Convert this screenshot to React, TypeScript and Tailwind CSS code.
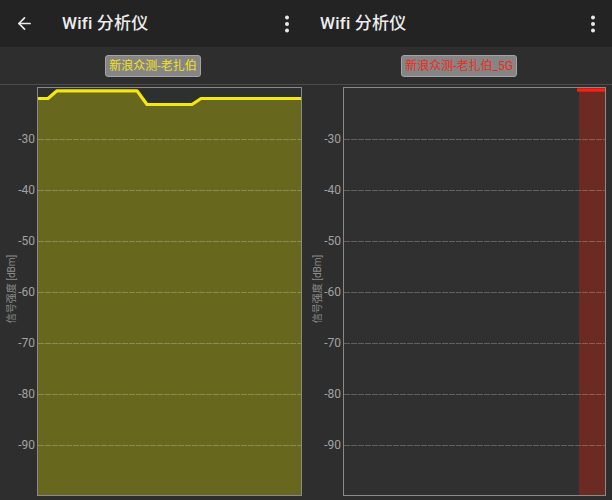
import { ArrowLeft } from "lucide-react";

const FONT = { fontFamily: 'Roboto, "Noto Sans CJK SC", sans-serif' };

// plot geometry (px): grid lines every 51px, top of plot is about -20 dBm
const PLOT_H = 409;
const TICKS = [-30, -40, -50, -60, -70, -80, -90];

function Dots() {
  return (
    <svg width="6" height="18" viewBox="0 0 6 18" className="shrink-0">
      <circle cx="3" cy="2.5" r="2" fill="#e8e8e8" />
      <circle cx="3" cy="9" r="2" fill="#e8e8e8" />
      <circle cx="3" cy="15.5" r="2" fill="#e8e8e8" />
    </svg>
  );
}

function Header({ back }: { back?: boolean }) {
  return (
    <div className="h-[47px] bg-[#232323] flex items-center shrink-0">
      {back ? (
        <div className="w-[62px] pl-[15px] flex items-center">
          <ArrowLeft size={19} strokeWidth={2.2} color="#ececec" />
        </div>
      ) : (
        <div className="w-[14px]" />
      )}
      <div className="flex-1 text-[17px] font-medium text-[#ededed] tracking-[0.2px]">
        Wifi 分析仪
      </div>
      <div className="pr-[16px]">
        <Dots />
      </div>
    </div>
  );
}

function Badge({ label, color }: { label: string; color: string }) {
  return (
    <div className="h-[38px] flex items-center justify-center border-b border-[#4b4b4b] shrink-0">
      <div
        className="h-[22px] px-[3px] rounded-[3px] bg-[#858585] border border-[#a4a4a4] flex items-center text-[12px] leading-none"
        style={{ color }}
      >
        {label}
      </div>
    </div>
  );
}

function Axis({ width }: { width: number }) {
  return (
    <div className="relative shrink-0" style={{ width }}>
      <div
        className="absolute left-[12px] text-[10px] text-[#8c8c8c] whitespace-nowrap leading-none"
        style={{ top: 202, transform: "translate(-50%, -50%) rotate(-90deg)" }}
      >
        信号强度 [dBm]
      </div>
      {TICKS.map((t, i) => (
        <div
          key={t}
          className="absolute right-[2px] text-[12px] text-[#a2a2a2] leading-none -translate-y-1/2"
          style={{ top: 51 * (i + 1) + 1 }}
        >
          {t}
        </div>
      ))}
    </div>
  );
}

function Grid({ w }: { w: number }) {
  return (
    <>
      {TICKS.map((t, i) => (
        <line
          key={t}
          x1={0}
          x2={w}
          y1={51 * (i + 1) + 0.5}
          y2={51 * (i + 1) + 0.5}
          stroke="#ffffff"
          strokeOpacity={0.24}
          strokeDasharray="6 1"
          strokeWidth={1}
        />
      ))}
    </>
  );
}

function YellowPlot() {
  const w = 263;
  const pts = "0,10.5 10,10.5 19,2.8 99,2.8 109,16.5 154,16.5 163,10.5 263,10.5";
  return (
    <div className="border border-[#8a8a8a] bg-[#2e2f2f]" style={{ width: w + 2, height: PLOT_H }}>
      <svg width={w} height={PLOT_H - 2} className="block">
        <polygon points={`${pts} ${w},${PLOT_H} 0,${PLOT_H}`} fill="#67671e" />
        <Grid w={w} />
        <polyline points={pts} fill="none" stroke="#f4e812" strokeWidth={3.2} strokeLinejoin="round" />
      </svg>
    </div>
  );
}

function RedPlot() {
  const w = 261;
  return (
    <div className="border border-[#8a8a8a] bg-[#303030]" style={{ width: w + 2, height: PLOT_H }}>
      <svg width={w} height={PLOT_H - 2} className="block">
        <rect x={235} y={2} width={w - 235} height={PLOT_H} fill="#6b2a22" />
        <Grid w={w} />
        <line x1={233} x2={w} y1={2} y2={2} stroke="#ff1e12" strokeWidth={3.4} />
      </svg>
    </div>
  );
}

function Pane({
  back,
  label,
  color,
  axisW,
  children,
}: {
  back?: boolean;
  label: string;
  color: string;
  axisW: number;
  children: React.ReactNode;
}) {
  return (
    <div className="w-[306px] h-[500px] flex flex-col bg-[#2e2e2e]">
      <Header back={back} />
      <Badge label={label} color={color} />
      <div className="flex pt-[2px]">
        <Axis width={axisW} />
        {children}
      </div>
    </div>
  );
}

export default function App() {
  return (
    <div className="w-[612px] h-[500px] flex overflow-hidden bg-[#2e2e2e]" style={FONT}>
      <Pane back label="新浪众测-老扎伯" color="#f2e21c" axisW={37}>
        <YellowPlot />
      </Pane>
      <Pane label="新浪众测-老扎伯_5G" color="#ee2a1c" axisW={37}>
        <RedPlot />
      </Pane>
    </div>
  );
}
